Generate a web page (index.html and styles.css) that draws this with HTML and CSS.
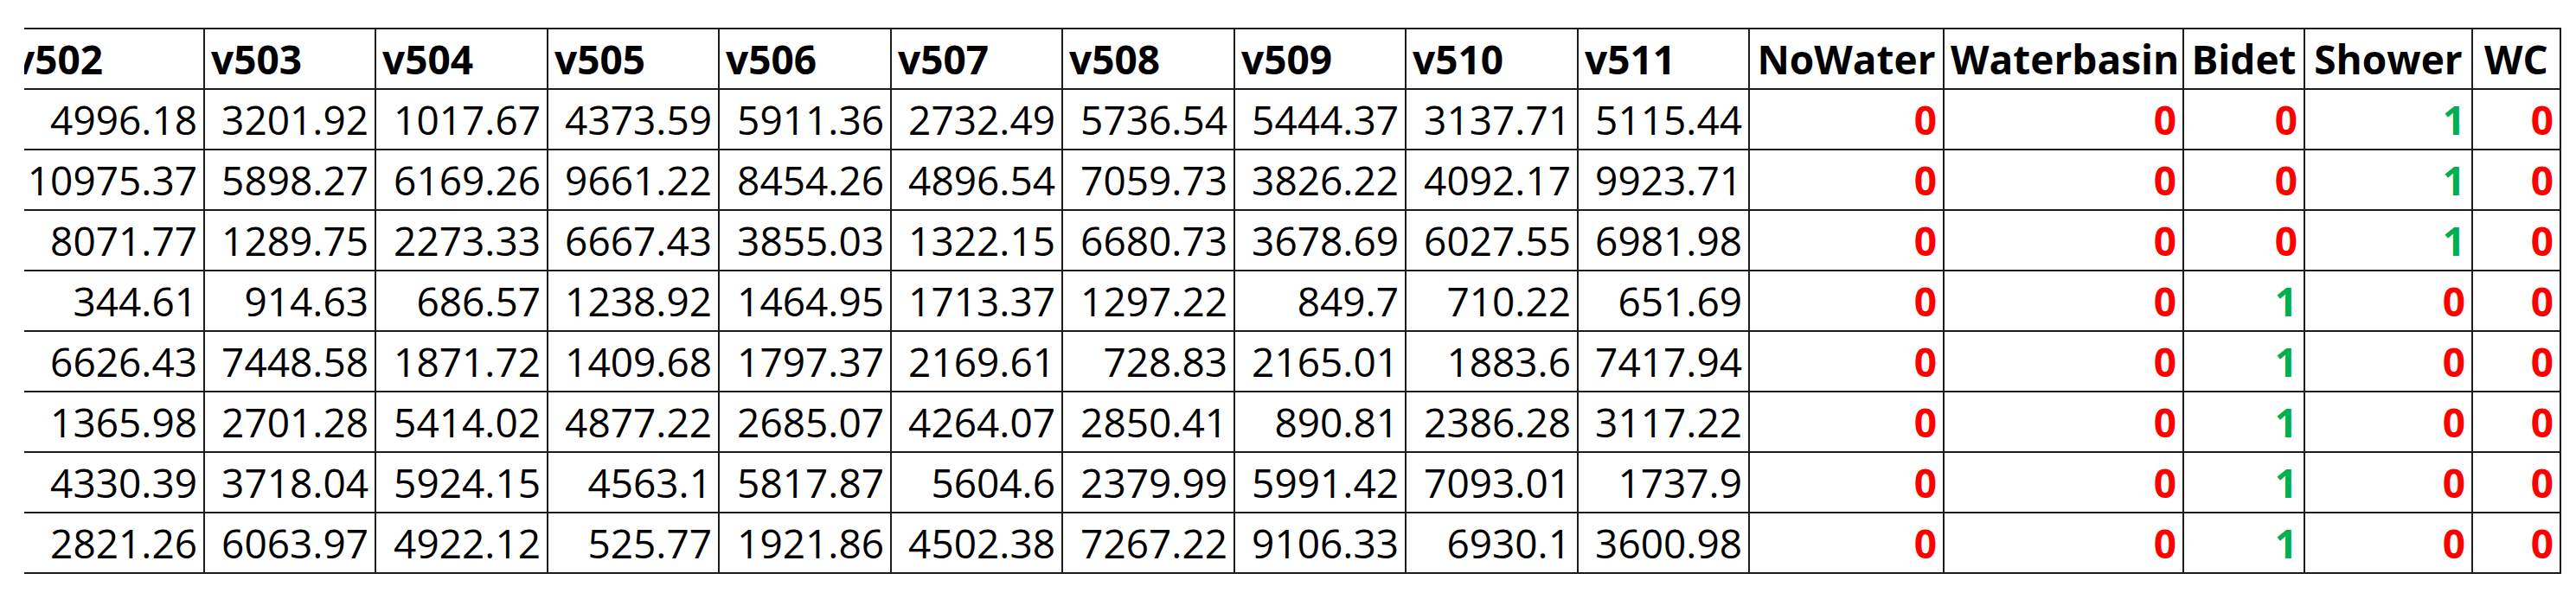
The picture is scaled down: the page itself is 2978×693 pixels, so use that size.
FILE: index.html
```html
<!DOCTYPE html>
<html>
<head>
<meta charset="utf-8">
<link rel="stylesheet" href="styles.css">
</head>
<body>
<div class="sheet">
<table class="grid">
<colgroup>
<col class="c-first">
<col class="c198"><col class="c199"><col class="c198"><col class="c199"><col class="c198"><col class="c199"><col class="c198"><col class="c199"><col class="c198">
<col class="c-nowater"><col class="c-basin"><col class="c-bidet"><col class="c-shower"><col class="c-wc">
</colgroup>
<thead>
<tr>
<th class="hv">v502</th><th class="hv">v503</th><th class="hv">v504</th><th class="hv">v505</th><th class="hv">v506</th><th class="hv">v507</th><th class="hv">v508</th><th class="hv">v509</th><th class="hv">v510</th><th class="hv">v511</th>
<th class="hc">NoWater</th><th class="hc">Waterbasin</th><th class="hc">Bidet</th><th class="hc">Shower</th><th class="hc">WC</th>
</tr>
</thead>
<tbody>
<tr><td>4996.18</td><td>3201.92</td><td>1017.67</td><td>4373.59</td><td>5911.36</td><td>2732.49</td><td>5736.54</td><td>5444.37</td><td>3137.71</td><td>5115.44</td><td class="no">0</td><td class="no">0</td><td class="no">0</td><td class="yes">1</td><td class="no">0</td></tr>
<tr><td>10975.37</td><td>5898.27</td><td>6169.26</td><td>9661.22</td><td>8454.26</td><td>4896.54</td><td>7059.73</td><td>3826.22</td><td>4092.17</td><td>9923.71</td><td class="no">0</td><td class="no">0</td><td class="no">0</td><td class="yes">1</td><td class="no">0</td></tr>
<tr><td>8071.77</td><td>1289.75</td><td>2273.33</td><td>6667.43</td><td>3855.03</td><td>1322.15</td><td>6680.73</td><td>3678.69</td><td>6027.55</td><td>6981.98</td><td class="no">0</td><td class="no">0</td><td class="no">0</td><td class="yes">1</td><td class="no">0</td></tr>
<tr><td>344.61</td><td>914.63</td><td>686.57</td><td>1238.92</td><td>1464.95</td><td>1713.37</td><td>1297.22</td><td>849.7</td><td>710.22</td><td>651.69</td><td class="no">0</td><td class="no">0</td><td class="yes">1</td><td class="no">0</td><td class="no">0</td></tr>
<tr><td>6626.43</td><td>7448.58</td><td>1871.72</td><td>1409.68</td><td>1797.37</td><td>2169.61</td><td>728.83</td><td>2165.01</td><td>1883.6</td><td>7417.94</td><td class="no">0</td><td class="no">0</td><td class="yes">1</td><td class="no">0</td><td class="no">0</td></tr>
<tr><td>1365.98</td><td>2701.28</td><td>5414.02</td><td>4877.22</td><td>2685.07</td><td>4264.07</td><td>2850.41</td><td>890.81</td><td>2386.28</td><td>3117.22</td><td class="no">0</td><td class="no">0</td><td class="yes">1</td><td class="no">0</td><td class="no">0</td></tr>
<tr><td>4330.39</td><td>3718.04</td><td>5924.15</td><td>4563.1</td><td>5817.87</td><td>5604.6</td><td>2379.99</td><td>5991.42</td><td>7093.01</td><td>1737.9</td><td class="no">0</td><td class="no">0</td><td class="yes">1</td><td class="no">0</td><td class="no">0</td></tr>
<tr><td>2821.26</td><td>6063.97</td><td>4922.12</td><td>525.77</td><td>1921.86</td><td>4502.38</td><td>7267.22</td><td>9106.33</td><td>6930.1</td><td>3600.98</td><td class="no">0</td><td class="no">0</td><td class="yes">1</td><td class="no">0</td><td class="no">0</td></tr>
</tbody>
</table>
</div>
</body>
</html>
```
FILE: styles.css
```css
html, body {
  margin: 0;
  padding: 0;
  background: #ffffff;
}

.sheet {
  margin-left: 28px;
  padding-top: 32px;
  width: 2940px;
  overflow: hidden;
}

.grid {
  margin-left: -23px;
  border-collapse: collapse;
  table-layout: fixed;
  width: 2954px;
  font-family: "Open Sans", "Liberation Sans", sans-serif;
  font-size: 46px;
  color: #000;
}

.c-first { width: 230px; }
.c198 { width: 198px; }
.c199 { width: 199px; }
.c-nowater { width: 225px; }
.c-basin { width: 277px; }
.c-bidet { width: 140px; }
.c-shower { width: 194px; }
.c-wc { width: 102px; }

.grid tr {
  height: 70px;
}

.grid th,
.grid td {
  border: 2px solid #1c1c1c;
  padding: 0 7px;
  vertical-align: middle;
  white-space: nowrap;
  overflow: hidden;
  line-height: 1;
}

.grid th {
  font-weight: 700;
}

.hv {
  text-align: left;
}

.hc {
  text-align: center;
  padding: 0 2px;
}

.grid td {
  text-align: right;
  font-weight: 400;
}

.grid td.no {
  color: #ff0000;
  font-weight: 700;
}

.grid td.yes {
  color: #00b050;
  font-weight: 700;
}
```
